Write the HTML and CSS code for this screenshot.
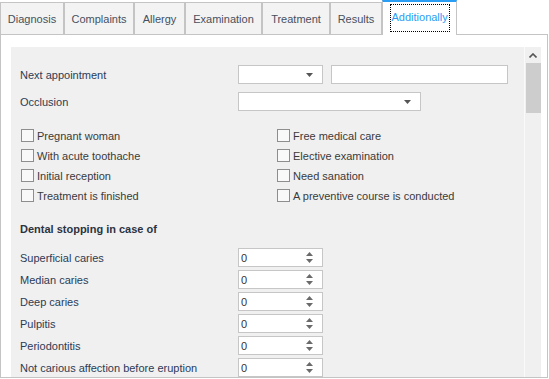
FILE: index.html
```html
<!DOCTYPE html>
<html>
<head>
<meta charset="utf-8">
<link rel="stylesheet" href="styles.css">
</head>
<body>
<div class="window">
  <div class="tabs">
    <div class="tab w-diag">Diagnosis</div>
    <div class="tab w-comp">Complaints</div>
    <div class="tab w-allg">Allergy</div>
    <div class="tab w-exam">Examination</div>
    <div class="tab w-treat">Treatment</div>
    <div class="tab w-res">Results</div>
    <div class="tab active w-add"><span class="focus">Additionally</span></div>
  </div>
  <div class="panel">
    <div class="scroller">
      <div class="content">
        <div class="row">
          <div class="label">Next appointment</div>
          <div class="combo w-small"><svg class="drop" width="7" height="4" viewBox="0 0 7 4"><path d="M0 0H7L3.5 4Z" fill="#555"/></svg></div>
          <div class="textbox"></div>
        </div>
        <div class="row row-gap">
          <div class="label">Occlusion</div>
          <div class="combo w-wide"><svg class="drop" width="7" height="4" viewBox="0 0 7 4"><path d="M0 0H7L3.5 4Z" fill="#555"/></svg></div>
        </div>
        <div class="checks">
          <div class="check"><span class="box"></span>Pregnant woman</div>
          <div class="check"><span class="box"></span>Free medical care</div>
          <div class="check"><span class="box"></span>With acute toothache</div>
          <div class="check"><span class="box"></span>Elective examination</div>
          <div class="check"><span class="box"></span>Initial reception</div>
          <div class="check"><span class="box"></span>Need sanation</div>
          <div class="check"><span class="box"></span>Treatment is finished</div>
          <div class="check"><span class="box"></span>A preventive course is conducted</div>
        </div>
        <div class="heading">Dental stopping in case of</div>
        <div class="spins">
          <div class="row"><div class="label">Superficial caries</div><div class="spin"><span class="val">0</span><span class="arrows"><svg width="7" height="11" viewBox="0 0 7 11"><path d="M0 4L3.5 0L7 4Z M0 7H7L3.5 11Z" fill="#6a6a6a"/></svg></span></div></div>
          <div class="row"><div class="label">Median caries</div><div class="spin"><span class="val">0</span><span class="arrows"><svg width="7" height="11" viewBox="0 0 7 11"><path d="M0 4L3.5 0L7 4Z M0 7H7L3.5 11Z" fill="#6a6a6a"/></svg></span></div></div>
          <div class="row"><div class="label">Deep caries</div><div class="spin"><span class="val">0</span><span class="arrows"><svg width="7" height="11" viewBox="0 0 7 11"><path d="M0 4L3.5 0L7 4Z M0 7H7L3.5 11Z" fill="#6a6a6a"/></svg></span></div></div>
          <div class="row"><div class="label">Pulpitis</div><div class="spin"><span class="val">0</span><span class="arrows"><svg width="7" height="11" viewBox="0 0 7 11"><path d="M0 4L3.5 0L7 4Z M0 7H7L3.5 11Z" fill="#6a6a6a"/></svg></span></div></div>
          <div class="row"><div class="label">Periodontitis</div><div class="spin"><span class="val">0</span><span class="arrows"><svg width="7" height="11" viewBox="0 0 7 11"><path d="M0 4L3.5 0L7 4Z M0 7H7L3.5 11Z" fill="#6a6a6a"/></svg></span></div></div>
          <div class="row"><div class="label">Not carious affection before eruption</div><div class="spin"><span class="val">0</span><span class="arrows"><svg width="7" height="11" viewBox="0 0 7 11"><path d="M0 4L3.5 0L7 4Z M0 7H7L3.5 11Z" fill="#6a6a6a"/></svg></span></div></div>
        </div>
      </div>
      <div class="scrollbar">
        <svg class="chev" width="8" height="5" viewBox="0 0 8 5"><path d="M0.5 4.5L4 1L7.5 4.5" fill="none" stroke="#555" stroke-width="1.6"/></svg>
        <div class="thumb"></div>
      </div>
    </div>
  </div>
</div>
</body>
</html>
```

FILE: styles.css
```css
* { box-sizing: border-box; }
html, body { margin: 0; padding: 0; background: #fff; }
body {
  font-family: "Liberation Sans", Arial, sans-serif;
  font-size: 11px;
  width: 549px;
  height: 379px;
  overflow: hidden;
}
.window { width: 549px; }

.tabs {
  display: flex;
  align-items: flex-end;
  height: 34px;
}
.tab {
  height: 32px;
  background: #f3f3f3;
  border: 1px solid #c4c4c4;
  border-bottom: none;
  color: #47505e;
  display: flex;
  align-items: center;
  justify-content: center;
  padding-top: 1px;
}
.w-diag { width: 64px; }
.w-comp { width: 70px; }
.w-allg { width: 51px; }
.w-exam { width: 77px; }
.w-treat { width: 68px; }
.w-res { width: 52px; }
.w-add { width: 75px; }
.tab.active {
  height: 35px;
  margin-bottom: -1px;
  background: #fff;
  border-top: 2px solid #2a9df4;
  color: #2a9df4;
  position: relative;
  z-index: 1;
  padding-top: 0;
  padding-bottom: 2px;
}
.focus {
  border: 1px dotted #000;
  padding: 6px 0 7px 1px;
  width: 60px;
  display: block;
  text-align: left;
  line-height: 13px;
}

.panel {
  width: 548px;
  height: 344px;
  border: 1px solid #c4c4c4;
  padding: 12px 6px 0 10px;
  overflow: hidden;
}
.scroller {
  display: flex;
  height: 330px;
  background: #f0f0f0;
}
.content {
  flex: 1;
  overflow: hidden;
  padding: 18px 0 0 9px;
  color: #2c3b55;
}
.scrollbar {
  width: 17px;
  border-left: 1px solid #fafafa;
  background: #f0f0f0;
  display: flex;
  flex-direction: column;
  align-items: center;
}
.chev { margin-top: 6px; }
.thumb {
  width: 15px;
  height: 50px;
  margin-top: 5px;
  background: #cdcdcd;
}

.row {
  display: flex;
  align-items: center;
  height: 19px;
}
.row-gap { margin-top: 8px; }
.label { width: 218px; }
.combo, .textbox, .spin {
  height: 19px;
  background: #fff;
  border: 1px solid #c6c6c6;
}
.combo {
  display: flex;
  align-items: center;
  justify-content: flex-end;
  padding-right: 9px;
}
.w-small { width: 85px; }
.w-wide { width: 183px; padding-right: 9px; }
.textbox { width: 177px; margin-left: 8px; }

.checks {
  display: grid;
  grid-template-columns: 256px 1fr;
  row-gap: 7px;
  margin-top: 18px;
  padding-left: 1px;
  color: #3a3a3a;
}
.check {
  display: flex;
  align-items: center;
  height: 13px;
  white-space: nowrap;
}
.box {
  width: 13px;
  height: 13px;
  border: 1px solid #8e8e8e;
  background: #f9f9f9;
  margin-right: 3px;
  flex: none;
}

.heading {
  font-weight: bold;
  margin-top: 20px;
  height: 14px;
  line-height: 14px;
  color: #2c3340;
}
.spins {
  margin-top: 12px;
  display: flex;
  flex-direction: column;
  gap: 3px;
}
.spin {
  width: 85px;
  display: flex;
  align-items: center;
  justify-content: space-between;
  padding: 0 9px 0 2px;
  color: #333;
}
.arrows { display: flex; }
```
